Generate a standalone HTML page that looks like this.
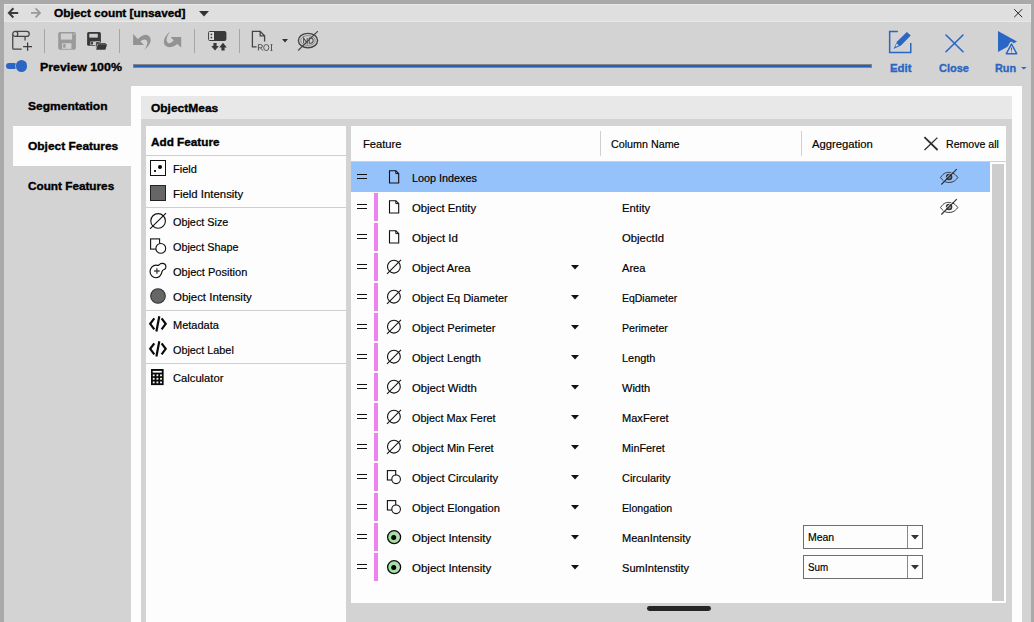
<!DOCTYPE html>
<html>
<head>
<meta charset="utf-8">
<title>Object count</title>
<style>
*{box-sizing:border-box;margin:0;padding:0}
html,body{width:1034px;height:622px;overflow:hidden;background:#d3d3d3}
body{font-family:"Liberation Sans",sans-serif;font-size:12px;color:#000;position:relative}
.abs{position:absolute}
.t{-webkit-text-stroke:.18px currentColor;position:absolute;white-space:nowrap;line-height:16px;height:16px;font-size:11px;color:#000;transform-origin:0 50%;display:block}
.tb{-webkit-text-stroke:.35px currentColor;font-weight:bold}
svg{position:absolute;overflow:visible}
.sep{position:absolute;width:1px;top:29px;height:24px;background:#a6a6a6}
.hsep{position:absolute;left:146px;width:200px;height:1px;background:#cfcfcf}
</style>
</head>
<body>
<svg width="0" height="0" style="left:0;top:0">
<defs>
<linearGradient id="gg" x1="0" y1="0" x2="1" y2="0"><stop offset="0" stop-color="#8fee8f"/><stop offset=".5" stop-color="#a6dca6"/><stop offset="1" stop-color="#c6d6c6"/></linearGradient>
</defs>
</svg>

<!-- outer frame -->
<div class="abs" style="left:0;top:0;width:1034px;height:622px;background:#a9a9a9"></div>
<div class="abs" style="left:4px;top:4px;width:1027px;height:618px;background:#d3d3d3"></div>
<!-- title bar -->
<div class="abs" style="left:4px;top:4px;width:1027px;height:18px;background:#dfdfdf;border:1px solid #e8e8e8"></div>
<!-- back / forward arrows -->
<svg style="left:7px;top:7px" width="13" height="12" viewBox="0 0 13 12"><path d="M11.2 5.900H2.400M6.400 1.300L1.900 5.900L6.400 10.500" fill="none" stroke="#3a3a3a" stroke-width="2"/></svg>
<svg style="left:30px;top:7px" width="13" height="12" viewBox="0 0 13 12"><path d="M1 5.900H9.600M5.600 1.400L10 5.900L5.600 10.400" fill="none" stroke="#9a9a9a" stroke-width="1.800"/></svg>
<svg style="left:199px;top:10.5px" width="10" height="6" viewBox="0 0 10 6"><path d="M0 0H10L5 5.4Z" fill="#333"/></svg>
<!-- window close -->
<svg style="left:1013.800px;top:8.700px" width="8.400" height="8.400" viewBox="0 0 8.400 8.400"><path d="M.2 .2L8.200 8.200M8.200 .2L.2 8.200" stroke="#222" stroke-width="1"/></svg>

<!-- toolbar icons -->
<!-- new -->
<svg style="left:11px;top:30px" width="23" height="22" viewBox="0 0 23 22"><path d="M1.750 18.200V4A2.550 2.550 0 0 1 4.300 1.400H15.700A2.500 2.500 0 0 1 15.700 6.400H3.600M4.300 1.400A2.500 2.500 0 0 1 4.300 6.400A2.500 2.500 0 0 1 1.800 3.900M1.750 18.200A1 1 0 0 0 2.750 19.200H10.700M14.050 6.400V10.500" fill="none" stroke="#444" stroke-width="1.250"/><path d="M12.100 16.500H21.050M16.600 12.400V20.850" fill="none" stroke="#3a3a3a" stroke-width="1.250"/></svg>
<div class="sep" style="left:44px"></div>
<!-- save (disabled) -->
<svg style="left:58px;top:32px" width="18" height="18" viewBox="0 0 18 18"><rect x=".2" y=".1" width="17.700" height="17.700" rx="1.700" fill="#9a9a9a"/><rect x="2.850" y="1.500" width="11.250" height="6.100" fill="#d0d0d0"/><rect x="15.400" y="1.500" width="1.200" height="1.500" fill="#c4c4c4"/><rect x="4.100" y="11.200" width="9.300" height="5.700" fill="#cfcfcf"/><rect x="5.200" y="12" width="2.300" height="3.700" fill="#9a9a9a"/></svg>
<!-- save as -->
<svg style="left:87px;top:32px" width="21" height="18" viewBox="0 0 21 18"><rect x=".1" y="-.1" width="13.800" height="13.800" rx="1.500" fill="#383838"/><rect x="2.300" y="1.800" width="8.500" height="3.800" fill="#cfcfcf"/><rect x="3.400" y="9.500" width="9.400" height="3.600" fill="#cfcfcf"/><rect x="4.100" y="9.900" width="1.800" height="2.600" fill="#383838"/><path d="M8.300 9.500H12.600L13.400 10.400H19.400V12.400H20.700L18.700 18.300H8.300Z" fill="#d3d3d3"/><path d="M8.900 10.100H12.400L13.200 11H18.800V12.200H10.400L8.900 16.800Z" fill="#555"/><path d="M10.900 12.300H20.100L18.400 17.800H9.100Z" fill="#383838"/></svg>
<div class="sep" style="left:119px"></div>
<!-- undo -->
<svg style="left:133px;top:32px" width="19" height="19" viewBox="0 0 19 19"><path d="M.1 2.100V13.100H11L7.500 9.600C9.500 7 14.200 6.500 14.400 10.500C14.200 13.400 12.400 16.300 11.200 18.300C14.700 15.200 17.900 11.700 17.600 7.600C17.300 3 12.400 -.3 4.900 6.900Z" fill="#939393"/></svg>
<!-- redo -->
<svg style="left:162.500px;top:31px" width="19" height="19" viewBox="0 0 19 19"><path d="M7 .6C3.200 4 .3 8 1 12.100C1.800 16.150 7.300 18.500 14.200 13L18.200 16.400V6H7.600L10.650 9.500C8.400 12.100 5.500 13.250 4.100 10.900C2.650 8 5 3.400 7 .6Z" fill="#939393"/></svg>
<div class="sep" style="left:194px"></div>
<!-- usb -->
<svg style="left:207.5px;top:31px" width="19" height="20" viewBox="0 0 19 20"><path d="M6 0H16.4A2 2 0 0 1 18.4 2V8A2 2 0 0 1 16.4 10H6Z" fill="#3a3a3a"/><path d="M6 .5H1.6A1 1 0 0 0 .6 1.5V8.5A1 1 0 0 0 1.600 9.5H6" fill="#e2e2e2" stroke="#3a3a3a" stroke-width="1"/><rect x="2.6" y="2.6" width="1.6" height="1.6" fill="#3a3a3a"/><rect x="2.6" y="5.8" width="1.6" height="1.600" fill="#3a3a3a"/><path d="M5.400 12H8.6V15H10.800L7 19.600L3.200 15H5.400Z" fill="#383838"/><path d="M13.400 19.600H16.600V16.400H18.800L15 11.800L11.200 16.400H13.400Z" fill="#383838"/></svg>
<div class="sep" style="left:239px"></div>
<!-- ROI doc -->
<svg style="left:251px;top:30px" width="22" height="22" viewBox="0 0 22 22"><path d="M5.600 16.800H1.400V1.400H9.200L13.600 5.800V11.600M9.200 1.400V5.800H13.600" fill="none" stroke="#444" stroke-width="1.300"/><path d="M7.400 20.600V14.600H9.600Q11.400 14.600 11.400 16.200Q11.400 17.800 9.600 17.800H7.400M9.400 17.800L11.800 20.600M20.500 14.600V20.500M19.600 14.600H21.400M19.600 20.500H21.400" fill="none" stroke="#555" stroke-width="1"/><ellipse cx="15.300" cy="17.550" rx="2.600" ry="3" fill="none" stroke="#555" stroke-width="1"/></svg>
<svg style="left:282px;top:39px" width="6" height="4" viewBox="0 0 6 4"><path d="M0 0H6L3 3.400Z" fill="#333"/></svg>
<!-- ND eye -->
<svg style="left:297px;top:30px" width="22" height="22" viewBox="0 0 22 22"><ellipse cx="11" cy="10.500" rx="9.600" ry="7.200" fill="none" stroke="#444" stroke-width="1.350"/><ellipse cx="11" cy="10.500" rx="7.300" ry="4.900" fill="none" stroke="#666" stroke-width=".7"/><path d="M6.600 13.200V8L10.200 13.200V8M12.200 8V13.200H13.600Q16.200 13.200 16.200 10.600Q16.200 8 13.600 8Z" fill="none" stroke="#505050" stroke-width="1.050"/><path d="M1.100 20.500L20.800 1.100" stroke="#444" stroke-width="1.100"/></svg>

<!-- preview toggle -->
<div class="abs" style="left:6px;top:63.200px;width:11px;height:6px;border-radius:3px;background:#2a66c3"></div>
<div class="abs" style="left:15.800px;top:60.200px;width:11.600px;height:11.600px;border-radius:6px;background:#2a66c3;box-shadow:0 0 0 .6px #d3d3d3"></div>
<!-- blue progress line -->
<div class="abs" style="left:133px;top:64px;width:739px;height:4px;background:#2360b8;border:1px solid #858585"></div>

<!-- Edit / Close / Run -->
<svg style="left:888px;top:30px" width="25" height="24" viewBox="0 0 25 24"><path d="M9.900 1.550H1.650V22.500H22.750V13" fill="none" stroke="#2a66c3" stroke-width="1.500"/><path d="M5.500 18.900L9.100 11.400L18.900 1.900L22.750 5.500L13 15.500Z" fill="#2a66c3"/><path d="M8.700 13.300L10.900 15.600L7.300 17Z" fill="#d3d3d3"/></svg>
<svg style="left:944.500px;top:33.500px" width="19" height="19" viewBox="0 0 19 19"><path d="M1 1L18 17.700M18 1L1 17.700" stroke="#2a66c3" stroke-width="1.600" stroke-linecap="round"/></svg>
<svg style="left:997px;top:30px" width="22" height="26" viewBox="0 0 22 26"><path d="M.97 .9V21.960L20 11.400Z" fill="#2a66c3"/><path d="M14.500 14L19.700 23.700H9.400Z" fill="#d3d3d3" stroke="#d3d3d3" stroke-width="4.200" stroke-linejoin="round"/><path d="M14.500 14L19.700 23.700H9.400Z" fill="#d9d9d9" stroke="#2a66c3" stroke-width="1.500" stroke-linejoin="round"/><path d="M14.500 17.600V20.600M14.500 21.600V22.600" stroke="#2a66c3" stroke-width="1.100"/></svg>
<svg style="left:1020.700px;top:67px" width="6" height="3" viewBox="0 0 6 3"><path d="M0 0H5.600L2.800 2.600Z" fill="#2a66c3"/></svg>

<!-- content white panel -->
<div class="abs" style="left:131px;top:86px;width:891px;height:536px;background:#fdfdfd"></div>
<!-- selected tab -->
<div class="abs" style="left:13px;top:126px;width:119px;height:40px;background:#fdfdfd"></div>
<!-- inner grey panel -->
<div class="abs" style="left:141px;top:96px;width:871px;height:526px;background:#d3d3d3"></div>
<div class="abs" style="left:141px;top:96px;width:871px;height:23px;background:#e8e8e8"></div>
<!-- add feature list -->
<div class="abs" style="left:146px;top:126px;width:200px;height:496px;background:#fdfdfd"></div>
<div class="hsep" style="top:155px"></div>
<div class="hsep" style="top:207px"></div>
<div class="hsep" style="top:310px"></div>
<div class="hsep" style="top:363px"></div>
<!-- list icons -->
<div class="abs" style="left:150px;top:160px;width:16px;height:16px;border:1.100px solid #111;background:#fdfdfd"></div>
<div class="abs" style="left:158.200px;top:165px;width:3.800px;height:3.800px;border-radius:2px;background:#000"></div>
<div class="abs" style="left:154.200px;top:170.400px;width:1.800px;height:1.800px;background:#222"></div>
<div class="abs" style="left:150px;top:185px;width:16px;height:16px;border:1.100px solid #222;background:#666"></div>
<svg style="left:150px;top:213px" width="16" height="16" viewBox="0 0 16 16"><circle cx="8.100" cy="7.900" r="7.300" fill="#fdfdfd" stroke="#111" stroke-width="1.100"/><path d="M0 15.800L16 .2" stroke="#111" stroke-width="1.100"/></svg>
<svg style="left:150px;top:238px" width="16" height="16" viewBox="0 0 16 16"><rect x=".6" y=".9" width="9" height="10.200" fill="#fdfdfd" stroke="#111" stroke-width="1.100"/><circle cx="10.800" cy="10.400" r="4.900" fill="#fdfdfd" stroke="#111" stroke-width="1.100"/></svg>
<svg style="left:150px;top:263px" width="16" height="16" viewBox="0 0 16 16"><path d="M8.300 2.400C9 2.400 9.200 1.600 9.800 1.100C10.600 .4 11.400 .3 12.200 .3C14.400 .3 15.900 1.900 15.900 3.900C15.900 5.200 15.200 6.100 14.100 6.600C13.200 7 12.400 7.400 12.200 8.200C12 9 11.800 9.800 11.400 10.500C10.400 12.900 8.400 14.700 6 14.700C2.700 14.700 .05 12 .05 8.600C.05 5 2.700 2.200 6 2.200C6.900 2.200 7.600 2.400 8.300 2.400Z" fill="#fdfdfd" stroke="#111" stroke-width="1.150"/><path d="M4.100 8H9.700M6.900 5.200V10.800" stroke="#444" stroke-width="1.400"/></svg>
<svg style="left:150px;top:288px" width="16" height="16" viewBox="0 0 16 16"><circle cx="8" cy="8" r="7.300" fill="#666" stroke="#333" stroke-width="1.100"/></svg>
<svg style="left:150px;top:317px" width="16" height="15" viewBox="0 0 16 15"><path d="M4.300 1.400L.2 6.800L4.300 12.400M11.600 1.400L15.700 6.800L11.600 12.400M9.300 -.8L6.400 14.500" fill="none" stroke="#0a0a0a" stroke-width="2.200" stroke-linejoin="miter"/></svg>
<svg style="left:150px;top:342px" width="16" height="15" viewBox="0 0 16 15"><path d="M4.300 1.400L.2 6.800L4.300 12.400M11.600 1.400L15.700 6.800L11.600 12.400M9.300 -.8L6.400 14.500" fill="none" stroke="#0a0a0a" stroke-width="2.200" stroke-linejoin="miter"/></svg>
<svg style="left:151.400px;top:368.900px" width="12.650" height="16.100" viewBox="0 0 12.650 16.100"><rect x="0" y="0" width="12.650" height="16.100" fill="#0a0a0a"/><rect x="1.700" y="1.900" width="9.100" height="1.700" fill="#fdfdfd"/><g fill="#fdfdfd"><rect x="1.80" y="5.40" width="1.800" height="1.800"/><rect x="5.50" y="5.40" width="1.800" height="1.800"/><rect x="9.10" y="5.40" width="1.800" height="1.800"/><rect x="1.80" y="8.90" width="1.800" height="1.800"/><rect x="5.50" y="8.90" width="1.800" height="1.800"/><rect x="9.10" y="8.90" width="1.800" height="1.800"/><rect x="1.80" y="12.50" width="1.800" height="1.800"/><rect x="5.50" y="12.50" width="1.800" height="1.800"/><rect x="9.10" y="12.50" width="1.800" height="1.800"/></g></svg>

<!-- table -->
<div class="abs" style="left:351px;top:126px;width:655px;height:477px;background:#fdfdfd"></div>
<div class="abs" style="left:351px;top:161px;width:655px;height:1px;background:#cfcfcf"></div>
<div class="abs" style="left:600px;top:131px;width:1px;height:25px;background:#d0d0d0"></div>
<div class="abs" style="left:801px;top:131px;width:1px;height:25px;background:#d0d0d0"></div>
<!-- remove all X -->
<svg style="left:923.500px;top:137px" width="14" height="13.200" viewBox="0 0 14 13.200"><path d="M.4 .2L13.600 13" stroke="#2e2e2e" stroke-width="1.800"/><path d="M13.400 .6L.5 13" stroke="#2e2e2e" stroke-width="1.300"/></svg>
<!-- scrollbar -->
<div class="abs" style="left:992px;top:164px;width:12px;height:437px;background:#cdcdcd"></div>
<div class="abs" style="left:351px;top:162px;width:639px;height:30px;background:#96c2fb"></div>
<div class="abs" style="left:357px;top:173.7px;width:10px;height:1.3px;background:#111"></div>
<div class="abs" style="left:357px;top:177.9px;width:10px;height:1.3px;background:#111"></div>
<svg style="left:386px;top:169px" width="16" height="16" viewBox="0 0 16 16"><path d="M3.500 1.700H9.800L12.700 4.600V14H3.500Z" fill="none" stroke="#111" stroke-width="1.100"/><path d="M9.800 1.700V4.600H12.700" fill="none" stroke="#111" stroke-width="1"/></svg>
<div class="abs" style="left:374px;top:193px;width:4px;height:27.5px;background:#ee82ee"></div>
<div class="abs" style="left:357px;top:203.7px;width:10px;height:1.3px;background:#111"></div>
<div class="abs" style="left:357px;top:207.9px;width:10px;height:1.3px;background:#111"></div>
<svg style="left:386px;top:199px" width="16" height="16" viewBox="0 0 16 16"><path d="M3.500 1.700H9.800L12.700 4.600V14H3.500Z" fill="none" stroke="#111" stroke-width="1.100"/><path d="M9.800 1.700V4.600H12.700" fill="none" stroke="#111" stroke-width="1"/></svg>
<div class="abs" style="left:374px;top:223px;width:4px;height:27.5px;background:#ee82ee"></div>
<div class="abs" style="left:357px;top:233.7px;width:10px;height:1.3px;background:#111"></div>
<div class="abs" style="left:357px;top:237.9px;width:10px;height:1.3px;background:#111"></div>
<svg style="left:386px;top:229px" width="16" height="16" viewBox="0 0 16 16"><path d="M3.500 1.700H9.800L12.700 4.600V14H3.500Z" fill="none" stroke="#111" stroke-width="1.100"/><path d="M9.800 1.700V4.600H12.700" fill="none" stroke="#111" stroke-width="1"/></svg>
<div class="abs" style="left:374px;top:253px;width:4px;height:27.5px;background:#ee82ee"></div>
<div class="abs" style="left:357px;top:263.7px;width:10px;height:1.3px;background:#111"></div>
<div class="abs" style="left:357px;top:267.9px;width:10px;height:1.3px;background:#111"></div>
<svg style="left:386px;top:259px" width="16" height="16" viewBox="0 0 16 16"><circle cx="7.9" cy="7.7" r="6.4" fill="#fdfdfd" stroke="#111" stroke-width="1.1"/><path d="M1 14.8L15 .8" stroke="#111" stroke-width="1.1"/></svg>
<svg style="left:570.5px;top:264.5px" width="8" height="5" viewBox="0 0 8 5"><path d="M0 0H8L4 4.6Z" fill="#111"/></svg>
<div class="abs" style="left:374px;top:283px;width:4px;height:27.5px;background:#ee82ee"></div>
<div class="abs" style="left:357px;top:293.7px;width:10px;height:1.3px;background:#111"></div>
<div class="abs" style="left:357px;top:297.9px;width:10px;height:1.3px;background:#111"></div>
<svg style="left:386px;top:289px" width="16" height="16" viewBox="0 0 16 16"><circle cx="7.9" cy="7.7" r="6.4" fill="#fdfdfd" stroke="#111" stroke-width="1.1"/><path d="M1 14.8L15 .8" stroke="#111" stroke-width="1.1"/></svg>
<svg style="left:570.5px;top:294.5px" width="8" height="5" viewBox="0 0 8 5"><path d="M0 0H8L4 4.6Z" fill="#111"/></svg>
<div class="abs" style="left:374px;top:313px;width:4px;height:27.5px;background:#ee82ee"></div>
<div class="abs" style="left:357px;top:323.7px;width:10px;height:1.3px;background:#111"></div>
<div class="abs" style="left:357px;top:327.9px;width:10px;height:1.3px;background:#111"></div>
<svg style="left:386px;top:319px" width="16" height="16" viewBox="0 0 16 16"><circle cx="7.9" cy="7.7" r="6.4" fill="#fdfdfd" stroke="#111" stroke-width="1.1"/><path d="M1 14.8L15 .8" stroke="#111" stroke-width="1.1"/></svg>
<svg style="left:570.5px;top:324.5px" width="8" height="5" viewBox="0 0 8 5"><path d="M0 0H8L4 4.6Z" fill="#111"/></svg>
<div class="abs" style="left:374px;top:343px;width:4px;height:27.5px;background:#ee82ee"></div>
<div class="abs" style="left:357px;top:353.7px;width:10px;height:1.3px;background:#111"></div>
<div class="abs" style="left:357px;top:357.9px;width:10px;height:1.3px;background:#111"></div>
<svg style="left:386px;top:349px" width="16" height="16" viewBox="0 0 16 16"><circle cx="7.9" cy="7.7" r="6.4" fill="#fdfdfd" stroke="#111" stroke-width="1.1"/><path d="M1 14.8L15 .8" stroke="#111" stroke-width="1.1"/></svg>
<svg style="left:570.5px;top:354.5px" width="8" height="5" viewBox="0 0 8 5"><path d="M0 0H8L4 4.6Z" fill="#111"/></svg>
<div class="abs" style="left:374px;top:373px;width:4px;height:27.5px;background:#ee82ee"></div>
<div class="abs" style="left:357px;top:383.7px;width:10px;height:1.3px;background:#111"></div>
<div class="abs" style="left:357px;top:387.9px;width:10px;height:1.3px;background:#111"></div>
<svg style="left:386px;top:379px" width="16" height="16" viewBox="0 0 16 16"><circle cx="7.9" cy="7.7" r="6.4" fill="#fdfdfd" stroke="#111" stroke-width="1.1"/><path d="M1 14.8L15 .8" stroke="#111" stroke-width="1.1"/></svg>
<svg style="left:570.5px;top:384.5px" width="8" height="5" viewBox="0 0 8 5"><path d="M0 0H8L4 4.6Z" fill="#111"/></svg>
<div class="abs" style="left:374px;top:403px;width:4px;height:27.5px;background:#ee82ee"></div>
<div class="abs" style="left:357px;top:413.7px;width:10px;height:1.3px;background:#111"></div>
<div class="abs" style="left:357px;top:417.9px;width:10px;height:1.3px;background:#111"></div>
<svg style="left:386px;top:409px" width="16" height="16" viewBox="0 0 16 16"><circle cx="7.9" cy="7.7" r="6.4" fill="#fdfdfd" stroke="#111" stroke-width="1.1"/><path d="M1 14.8L15 .8" stroke="#111" stroke-width="1.1"/></svg>
<svg style="left:570.5px;top:414.5px" width="8" height="5" viewBox="0 0 8 5"><path d="M0 0H8L4 4.6Z" fill="#111"/></svg>
<div class="abs" style="left:374px;top:433px;width:4px;height:27.5px;background:#ee82ee"></div>
<div class="abs" style="left:357px;top:443.7px;width:10px;height:1.3px;background:#111"></div>
<div class="abs" style="left:357px;top:447.9px;width:10px;height:1.3px;background:#111"></div>
<svg style="left:386px;top:439px" width="16" height="16" viewBox="0 0 16 16"><circle cx="7.9" cy="7.7" r="6.4" fill="#fdfdfd" stroke="#111" stroke-width="1.1"/><path d="M1 14.8L15 .8" stroke="#111" stroke-width="1.1"/></svg>
<svg style="left:570.5px;top:444.5px" width="8" height="5" viewBox="0 0 8 5"><path d="M0 0H8L4 4.6Z" fill="#111"/></svg>
<div class="abs" style="left:374px;top:463px;width:4px;height:27.5px;background:#ee82ee"></div>
<div class="abs" style="left:357px;top:473.7px;width:10px;height:1.3px;background:#111"></div>
<div class="abs" style="left:357px;top:477.9px;width:10px;height:1.3px;background:#111"></div>
<svg style="left:386px;top:469px" width="16" height="16" viewBox="0 0 16 16"><rect x="1.4" y="1.6" width="8.3" height="9.4" fill="#fdfdfd" stroke="#111" stroke-width="1.1"/><circle cx="10.1" cy="10.3" r="4.3" fill="#fdfdfd" stroke="#111" stroke-width="1.1"/></svg>
<svg style="left:570.5px;top:474.5px" width="8" height="5" viewBox="0 0 8 5"><path d="M0 0H8L4 4.6Z" fill="#111"/></svg>
<div class="abs" style="left:374px;top:493px;width:4px;height:27.5px;background:#ee82ee"></div>
<div class="abs" style="left:357px;top:503.7px;width:10px;height:1.3px;background:#111"></div>
<div class="abs" style="left:357px;top:507.9px;width:10px;height:1.3px;background:#111"></div>
<svg style="left:386px;top:499px" width="16" height="16" viewBox="0 0 16 16"><rect x="1.4" y="1.6" width="8.3" height="9.4" fill="#fdfdfd" stroke="#111" stroke-width="1.1"/><circle cx="10.1" cy="10.3" r="4.3" fill="#fdfdfd" stroke="#111" stroke-width="1.1"/></svg>
<svg style="left:570.5px;top:504.5px" width="8" height="5" viewBox="0 0 8 5"><path d="M0 0H8L4 4.6Z" fill="#111"/></svg>
<div class="abs" style="left:374px;top:523px;width:4px;height:27.5px;background:#ee82ee"></div>
<div class="abs" style="left:357px;top:533.7px;width:10px;height:1.3px;background:#111"></div>
<div class="abs" style="left:357px;top:537.9px;width:10px;height:1.3px;background:#111"></div>
<svg style="left:386px;top:529px" width="16" height="16" viewBox="0 0 16 16"><circle cx="8.100" cy="8.200" r="6.500" fill="url(#gg)" stroke="#0c0c0c" stroke-width="1.300"/><circle cx="7.700" cy="8.400" r="2.500" fill="#000"/></svg>
<svg style="left:570.5px;top:534.5px" width="8" height="5" viewBox="0 0 8 5"><path d="M0 0H8L4 4.6Z" fill="#111"/></svg>
<div class="abs" style="left:374px;top:553px;width:4px;height:27.5px;background:#ee82ee"></div>
<div class="abs" style="left:357px;top:563.7px;width:10px;height:1.3px;background:#111"></div>
<div class="abs" style="left:357px;top:567.9px;width:10px;height:1.3px;background:#111"></div>
<svg style="left:386px;top:559px" width="16" height="16" viewBox="0 0 16 16"><circle cx="8.100" cy="8.200" r="6.500" fill="url(#gg)" stroke="#0c0c0c" stroke-width="1.300"/><circle cx="7.700" cy="8.400" r="2.500" fill="#000"/></svg>
<svg style="left:570.5px;top:564.5px" width="8" height="5" viewBox="0 0 8 5"><path d="M0 0H8L4 4.6Z" fill="#111"/></svg>
<!-- eye icons -->
<svg style="left:940px;top:169px;color:#96c2fb" width="18" height="16" viewBox="0 0 18 16"><path d="M.5 8.600C4 3.200 7 3.400 9 3.400S14.500 3.800 17.800 8.600C14.500 13 11.500 13.400 9 13.400S4 13.200 .5 8.600Z" fill="none" stroke="#3a3a3a" stroke-width="1"/><circle cx="9.100" cy="7.900" r="2.500" fill="#333" fill-opacity=".35" stroke="#333" stroke-width="1.500"/><path d="M.5 14.700L16 -.6" stroke="currentColor" stroke-width=".9"/><path d="M1.300 15.500L16.800 .2" stroke="#2e2e2e" stroke-width="1.100"/></svg>
<svg style="left:940px;top:199px;color:#fdfdfd" width="18" height="16" viewBox="0 0 18 16"><path d="M.5 8.600C4 3.200 7 3.400 9 3.400S14.500 3.800 17.800 8.600C14.500 13 11.500 13.400 9 13.400S4 13.200 .5 8.600Z" fill="none" stroke="#3a3a3a" stroke-width="1"/><circle cx="9.100" cy="7.900" r="2.500" fill="#333" fill-opacity=".35" stroke="#333" stroke-width="1.500"/><path d="M.5 14.700L16 -.6" stroke="currentColor" stroke-width=".9"/><path d="M1.300 15.500L16.800 .2" stroke="#2e2e2e" stroke-width="1.100"/></svg>
<!-- combos -->
<div class="abs" style="left:803px;top:525px;width:120px;height:24px;border:1px solid #6e6e6e;background:#fdfdfd"></div>
<div class="abs" style="left:907px;top:526px;width:1px;height:22px;background:#8a8a8a"></div>
<svg style="left:911px;top:535px" width="8" height="5" viewBox="0 0 8 5"><path d="M0 0H8L4 4.400Z" fill="#333"/></svg>
<div class="abs" style="left:803px;top:555px;width:120px;height:24px;border:1px solid #6e6e6e;background:#fdfdfd"></div>
<div class="abs" style="left:907px;top:556px;width:1px;height:22px;background:#8a8a8a"></div>
<svg style="left:911px;top:565px" width="8" height="5" viewBox="0 0 8 5"><path d="M0 0H8L4 4.400Z" fill="#333"/></svg>
<!-- bottom handle -->
<div class="abs" style="left:647px;top:606px;width:64px;height:4.800px;border-radius:2.400px;background:#262626"></div>

<span class="t tb" style="left:54.3px;top:5.0px;transform:scaleX(1.0757)">Object count [unsaved]</span>
<span class="t tb" style="left:39.6px;top:59.0px;transform:scaleX(1.1253)">Preview 100%</span>
<span class="t tb" style="left:890.0px;top:60.0px;transform:scaleX(1.0346);color:#2a66c3">Edit</span>
<span class="t tb" style="left:939.3px;top:60.0px;transform:scaleX(1.0010);color:#2a66c3">Close</span>
<span class="t tb" style="left:995.2px;top:60.0px;transform:scaleX(0.9864);color:#2a66c3">Run</span>
<span class="t tb" style="left:28.0px;top:98.0px;transform:scaleX(1.0930)">Segmentation</span>
<span class="t tb" style="left:28.1px;top:138.0px;transform:scaleX(1.0849)">Object Features</span>
<span class="t tb" style="left:28.1px;top:178.0px;transform:scaleX(1.0683)">Count Features</span>
<span class="t tb" style="left:151.0px;top:100.0px;transform:scaleX(1.0883)">ObjectMeas</span>
<span class="t tb" style="left:151.3px;top:134.0px;transform:scaleX(1.0672)">Add Feature</span>
<span class="t" style="left:173.1px;top:161.0px;transform:scaleX(1.0024)">Field</span>
<span class="t" style="left:173.1px;top:186.0px;transform:scaleX(1.0343)">Field Intensity</span>
<span class="t" style="left:173.1px;top:214.0px;transform:scaleX(0.9849)">Object Size</span>
<span class="t" style="left:173.1px;top:239.0px;transform:scaleX(0.9827)">Object Shape</span>
<span class="t" style="left:173.1px;top:264.0px;transform:scaleX(1.0043)">Object Position</span>
<span class="t" style="left:173.1px;top:289.0px;transform:scaleX(1.0392)">Object Intensity</span>
<span class="t" style="left:173.1px;top:317.0px;transform:scaleX(1.0005)">Metadata</span>
<span class="t" style="left:173.1px;top:342.0px;transform:scaleX(0.9844)">Object Label</span>
<span class="t" style="left:173.1px;top:370.0px;transform:scaleX(1.0175)">Calculator</span>
<span class="t" style="left:362.9px;top:136.0px;transform:scaleX(1.0152)">Feature</span>
<span class="t" style="left:611.0px;top:136.0px;transform:scaleX(0.9756)">Column Name</span>
<span class="t" style="left:811.7px;top:136.0px;transform:scaleX(1.0248)">Aggregation</span>
<span class="t" style="left:946.0px;top:136.0px;transform:scaleX(0.9613)">Remove all</span>
<span class="t" style="left:411.8px;top:170.0px;transform:scaleX(0.9824)">Loop Indexes</span>
<span class="t" style="left:411.8px;top:200.0px;transform:scaleX(1.0279)">Object Entity</span>
<span class="t" style="left:622.4px;top:200.0px;transform:scaleX(1.0249)">Entity</span>
<span class="t" style="left:411.8px;top:230.0px;transform:scaleX(1.0424)">Object Id</span>
<span class="t" style="left:622.4px;top:230.0px;transform:scaleX(1.0276)">ObjectId</span>
<span class="t" style="left:411.8px;top:260.0px;transform:scaleX(1.0177)">Object Area</span>
<span class="t" style="left:622.4px;top:260.0px;transform:scaleX(1.0108)">Area</span>
<span class="t" style="left:411.8px;top:290.0px;transform:scaleX(0.9970)">Object Eq Diameter</span>
<span class="t" style="left:622.4px;top:290.0px;transform:scaleX(0.9504)">EqDiameter</span>
<span class="t" style="left:411.8px;top:320.0px;transform:scaleX(1.0117)">Object Perimeter</span>
<span class="t" style="left:622.4px;top:320.0px;transform:scaleX(0.9625)">Perimeter</span>
<span class="t" style="left:411.8px;top:350.0px;transform:scaleX(1.0044)">Object Length</span>
<span class="t" style="left:622.4px;top:350.0px;transform:scaleX(0.9924)">Length</span>
<span class="t" style="left:411.8px;top:380.0px;transform:scaleX(1.0275)">Object Width</span>
<span class="t" style="left:622.4px;top:380.0px;transform:scaleX(1.0027)">Width</span>
<span class="t" style="left:411.8px;top:410.0px;transform:scaleX(0.9910)">Object Max Feret</span>
<span class="t" style="left:622.4px;top:410.0px;transform:scaleX(1.0050)">MaxFeret</span>
<span class="t" style="left:411.8px;top:440.0px;transform:scaleX(1.0035)">Object Min Feret</span>
<span class="t" style="left:622.4px;top:440.0px;transform:scaleX(0.9837)">MinFeret</span>
<span class="t" style="left:411.8px;top:470.0px;transform:scaleX(1.0293)">Object Circularity</span>
<span class="t" style="left:622.4px;top:470.0px;transform:scaleX(0.9917)">Circularity</span>
<span class="t" style="left:411.8px;top:500.0px;transform:scaleX(1.0122)">Object Elongation</span>
<span class="t" style="left:622.4px;top:500.0px;transform:scaleX(0.9654)">Elongation</span>
<span class="t" style="left:411.8px;top:530.0px;transform:scaleX(1.0445)">Object Intensity</span>
<span class="t" style="left:622.4px;top:530.0px;transform:scaleX(1.0046)">MeanIntensity</span>
<span class="t" style="left:411.8px;top:560.0px;transform:scaleX(1.0445)">Object Intensity</span>
<span class="t" style="left:622.4px;top:560.0px;transform:scaleX(1.0069)">SumIntenstity</span>
<span class="t" style="left:808.4px;top:529.0px;transform:scaleX(0.9516)">Mean</span>
<span class="t" style="left:808.4px;top:559.0px;transform:scaleX(0.8928)">Sum</span>
</body>
</html>
